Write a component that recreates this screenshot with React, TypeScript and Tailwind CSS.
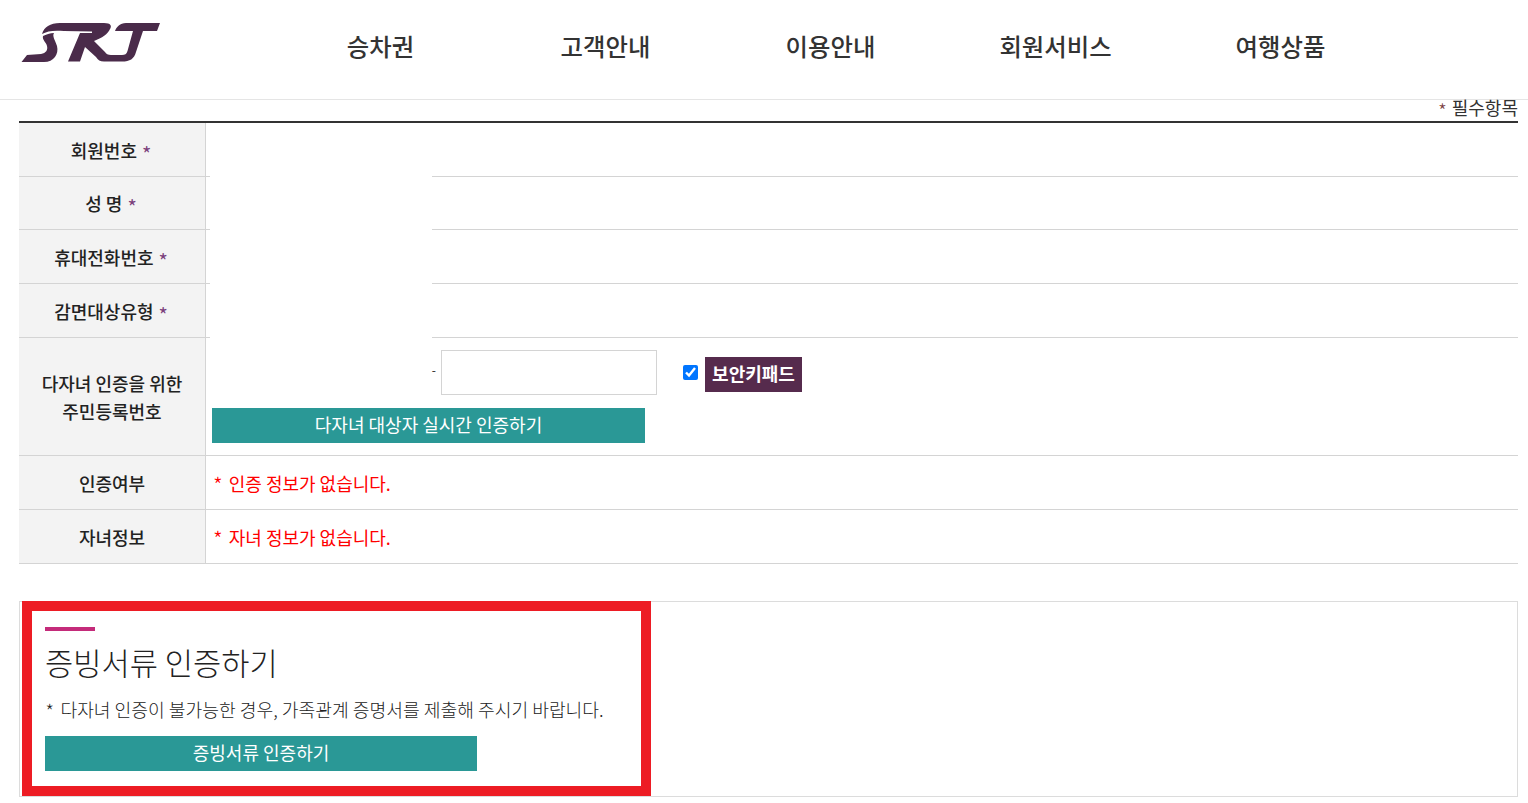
const FONT = "font-['Noto_Sans_CJK_KR','Noto_Sans',sans-serif]";

function Logo() {
  return (
    <svg width="142" height="42" viewBox="20 22 142 42" className="block">
      <g fill="#4a2b4a">
        <path d="M42 34 C44 27 50 23 60 23 L104 23 C111 23 112 26 110 29 C108 34 102 38 94 41 L105 52 C106 54 108 55 111 55 L122 55 C125 55 126.5 54 127.5 51 L133 31 L115 31 C116.5 27 120 23 126 23 L160 23 L157 31 L143 31 L136 52 C134 59 130 61.5 122 61.5 L104 61.5 C100 61.5 98 60 96 57 L85 47 L80 61.5 L68 61.5 L80 33 L92 33 L92 31.5 L64 31 C54 30 47 31 42 34 Z" />
        <path d="M21.5 62 L27 55 L41 54 C46 53 48 50 47 46 C46 42 42 40 43 36 C46 34.5 50 33 54 33 C52 36 55 40 57 46 C59 54 54 62 44 62 Z" />
      </g>
    </svg>
  );
}

const navItems = ["승차권", "고객안내", "이용안내", "회원서비스", "여행상품"];

function Star({ className }: { className: string }) {
  return <span className={`align-[-4px] leading-[0] ${className}`}>*</span>;
}

function LabelCell({ children, star, h, pad }: { children: React.ReactNode; star?: boolean; h: string; pad?: string }) {
  return (
    <div className={`w-[187px] shrink-0 bg-[#f3f3f3] border-r border-[#d4d4d4] flex items-center justify-center text-center text-[18px] leading-[28px] font-medium text-[#222] ${h}`}>
      <div className={pad}>
        {children}
        {star && <Star className="ml-[5px] mr-[2px] font-normal text-[20px] text-[#7b3f7b]" />}
      </div>
    </div>
  );
}

function MaskedRow({ label, h }: { label: string; h: string }) {
  return (
    <div className="flex">
      <div className="flex border-b border-[#d4d4d4] w-[191px] shrink-0">
        <LabelCell star h={h}>{label}</LabelCell>
      </div>
      <div className="w-[222px] shrink-0" />
      <div className="flex-1 border-b border-[#d4d4d4]" />
    </div>
  );
}

function TextRow({ label, text }: { label: string; text: string }) {
  return (
    <div className="flex border-b border-[#d4d4d4]">
      <LabelCell h="h-[53px]" pad="pt-[1px]">{label}</LabelCell>
      <div className="pl-[7px] pt-[2px] flex items-center text-[18px] text-[#ff0000]"><Star className="font-light text-[22px] mr-[6px]" />{text}</div>
    </div>
  );
}

export default function App() {
  return (
    <div className={`h-[803px] w-[1528px] overflow-hidden bg-white ${FONT}`}>
      <header className="h-[100px] border-b border-[#e5e5e5] flex">
        <div className="pl-[20px] pt-[22px] w-[268px] shrink-0"><Logo /></div>
        <nav className="flex pt-[26px]">
          {navItems.map((n) => (
            <div key={n} className="w-[225px] text-center text-[24.4px] leading-[40px] font-medium text-[#333]">{n}</div>
          ))}
        </nav>
      </header>
      <div className="pl-[19px] pr-[10px]">
        <div className="h-[21px] text-right text-[18px] leading-[15px] text-[#333]"><Star className="font-light text-[#7b3f3f] text-[20px] mr-[5px]" />필수항목</div>
        <div className="border-t-2 border-[#333]">
          <MaskedRow label="회원번호" h="h-[53px]" />
          <MaskedRow label="성 명" h="h-[52px]" />
          <MaskedRow label="휴대전화번호" h="h-[53px]" />
          <MaskedRow label="감면대상유형" h="h-[53px]" />
          <div className="flex border-b border-[#d4d4d4]">
            <LabelCell h="h-[117px]"><div>다자녀 인증을 위한<br />주민등록번호</div></LabelCell>
            <div className="pl-[6px] pt-[12px]">
              <div className="flex items-center h-[45px]">
                <span className="w-[229px] text-right pr-[5px] pb-[5px] text-[12px] text-[#222]">-</span>
                <div className="w-[216px] h-[45px] border border-[#d4d4d4] bg-white" />
                <input type="checkbox" defaultChecked className="ml-[26px] w-[15px] h-[15px] accent-[#0075ff]" />
                <span className="ml-[7px] mt-[3px] h-[35px] w-[97px] pb-[2px] bg-[#562b4d] text-white text-[18px] font-bold flex items-center justify-center">보안키패드</span>
              </div>
              <div className="mt-[13px] w-[433px] h-[35px] pb-[2px] bg-[#2a9896] text-white text-[18px] flex items-center justify-center">다자녀 대상자 실시간 인증하기</div>
            </div>
          </div>
          <TextRow label="인증여부" text="인증 정보가 없습니다." />
          <TextRow label="자녀정보" text="자녀 정보가 없습니다." />
        </div>
        <div className="mt-[37px] h-[196px] border border-[#dcdcdc] relative">
          <div className="absolute left-[2px] top-[-1px] w-[629px] h-[195px] border-[10px] border-[#ed1c24]" />
          <div className="pl-[25px] pt-[25px]">
            <div className="w-[50px] h-[4px] bg-[#c42b7a]" />
            <div className="mt-[9px] text-[30.7px] leading-[44px] font-light text-[#222]">증빙서류 인증하기</div>
            <div className="mt-[11px] text-[18.2px] leading-[28px] font-light text-[#222]"><Star className="font-thin text-[22px] mr-[6px]" />다자녀 인증이 불가능한 경우, 가족관계 증명서를 제출해 주시기 바랍니다.</div>
            <div className="mt-[13px] w-[432px] h-[35px] pb-[2px] bg-[#2a9896] text-white text-[18px] flex items-center justify-center">증빙서류 인증하기</div>
          </div>
        </div>
      </div>
    </div>
  );
}
